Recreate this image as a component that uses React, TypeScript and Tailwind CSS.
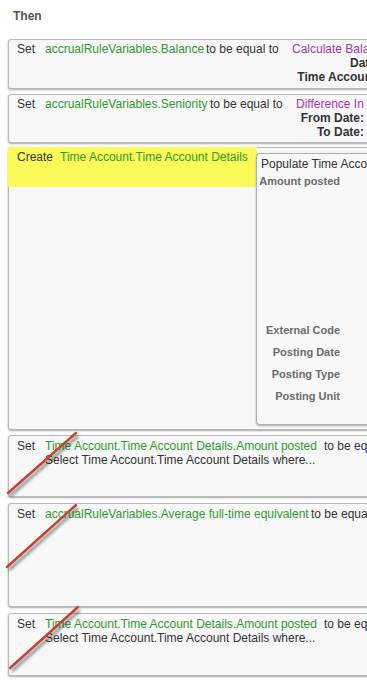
import type { ReactNode } from 'react';

const FONT = { fontFamily: '"Liberation Sans", Arial, sans-serif' };

function Slash({ x1, y1, x2, y2 }: { x1: number; y1: number; x2: number; y2: number }) {
  return (
    <svg
      className="pointer-events-none absolute left-[-1px] top-[-1px] overflow-visible"
      width="90"
      height="70"
    >
      <defs>
        <filter id="blur" x="-20%" y="-20%" width="140%" height="140%">
          <feGaussianBlur stdDeviation="1.4" />
        </filter>
      </defs>
      <line
        x1={x1 + 2}
        y1={y1 + 3}
        x2={x2 + 2}
        y2={y2 + 3}
        stroke="rgba(0,0,0,0.45)"
        strokeWidth="3"
        filter="url(#blur)"
      />
      <line x1={x1} y1={y1} x2={x2} y2={y2} stroke="#c4432e" strokeWidth="2.4" strokeLinecap="round" />
    </svg>
  );
}

function Box({ className, children }: { className: string; children: ReactNode }) {
  return (
    <div
      className={`relative ml-[8px] w-[430px] rounded-[3px] border border-[#b9b9b9] bg-[#f8f8f8] shadow-[0_1px_2px_rgba(0,0,0,0.35)] ${className}`}
    >
      {children}
    </div>
  );
}

export default function App() {
  return (
    <div
      style={FONT}
      className="h-[687px] w-[367px] overflow-hidden bg-white text-[12px] leading-[14px] text-[#333]"
    >
      <div className="pl-[13px] pt-[9px] font-bold text-[#555]">Then</div>

      <Box className="mt-[16px] h-[50px]">
        <div className="flex items-start pl-[8px] pt-[2px]">
          <span className="w-[28px] shrink-0">Set</span>
          <span className="w-[161px] shrink-0 text-[#2f9a2f]">accrualRuleVariables.Balance</span>
          <span className="w-[86px] shrink-0">to be equal to</span>
          <div className="shrink-0">
            <div className="whitespace-nowrap text-[#a434b4]">Calculate Balance</div>
            <div className="w-[88px] text-right font-bold leading-[14px]">
              <div className="whitespace-nowrap">Date:</div>
              <div className="whitespace-nowrap">Time Account:</div>
            </div>
          </div>
        </div>
      </Box>

      <Box className="mt-[5px] h-[49px]">
        <div className="flex items-start pl-[8px] pt-[2px]">
          <span className="w-[28px] shrink-0">Set</span>
          <span className="w-[165px] shrink-0 text-[#2f9a2f]">accrualRuleVariables.Seniority</span>
          <span className="w-[86px] shrink-0">to be equal to</span>
          <div className="shrink-0">
            <div className="whitespace-nowrap text-[#a434b4]">Difference In Years</div>
            <div className="w-[68px] text-right font-bold">
              <div className="whitespace-nowrap">From Date:</div>
              <div className="whitespace-nowrap">To Date:</div>
            </div>
          </div>
        </div>
      </Box>

      <Box className="mt-[4px] h-[283px]">
        <div className="flex items-start">
          <div className="-ml-px -mt-px flex h-[40px] w-[249px] shrink-0 items-start rounded-tl-[3px] bg-[#fafa58] pl-[9px] pt-[3px]">
            <span className="w-[43px] shrink-0">Create</span>
            <span className="whitespace-nowrap text-[#2f9a2f]">Time Account.Time Account Details</span>
          </div>
          <div className="-ml-px mt-[5px] h-[272px] w-[200px] shrink-0 rounded-l-[4px] border-y border-l border-[#b0b0b0] bg-[#f8f8f8] pl-[4px] pt-[3px] shadow-[0_1px_2px_rgba(0,0,0,0.3)]">
            <div className="whitespace-nowrap">Populate Time Account Details</div>
            <div className="-ml-[4px] mt-[3px] w-[83px] text-right text-[11px] font-bold text-[#6b6b6b]">
              <div className="whitespace-nowrap leading-[14px]">Amount posted</div>
              <div className="mt-[131px] leading-[22px]">
                <div className="whitespace-nowrap">External Code</div>
                <div className="whitespace-nowrap">Posting Date</div>
                <div className="whitespace-nowrap">Posting Type</div>
                <div className="whitespace-nowrap">Posting Unit</div>
              </div>
            </div>
          </div>
        </div>
      </Box>

      <Box className="mt-[5px] h-[62px]">
        <div className="flex items-start pl-[8px] pt-[3px]">
          <span className="w-[28px] shrink-0">Set</span>
          <div className="shrink-0">
            <div className="flex">
              <span className="w-[279px] shrink-0 text-[#2f9a2f]">Time Account.Time Account Details.Amount posted</span>
              <span className="whitespace-nowrap">to be equal to</span>
            </div>
            <div className="whitespace-nowrap">Select Time Account.Time Account Details where...</div>
          </div>
        </div>
        <Slash x1={0} y1={58} x2={68} y2={-2} />
      </Box>

      <Box className="mt-[6px] h-[104px]">
        <div className="flex items-start pl-[8px] pt-[3px]">
          <span className="w-[28px] shrink-0">Set</span>
          <span className="w-[266px] shrink-0 text-[#2f9a2f]">accrualRuleVariables.Average full-time equivalent</span>
          <span className="whitespace-nowrap">to be equal to</span>
        </div>
        <Slash x1={-1} y1={64} x2={68} y2={2} />
      </Box>

      <Box className="mt-[6px] h-[63px]">
        <div className="flex items-start pl-[8px] pt-[3px]">
          <span className="w-[28px] shrink-0">Set</span>
          <div className="shrink-0">
            <div className="flex">
              <span className="w-[279px] shrink-0 text-[#2f9a2f]">Time Account.Time Account Details.Amount posted</span>
              <span className="whitespace-nowrap">to be equal to</span>
            </div>
            <div className="whitespace-nowrap">Select Time Account.Time Account Details where...</div>
          </div>
        </div>
        <Slash x1={2} y1={55} x2={70} y2={-6} />
      </Box>
    </div>
  );
}
